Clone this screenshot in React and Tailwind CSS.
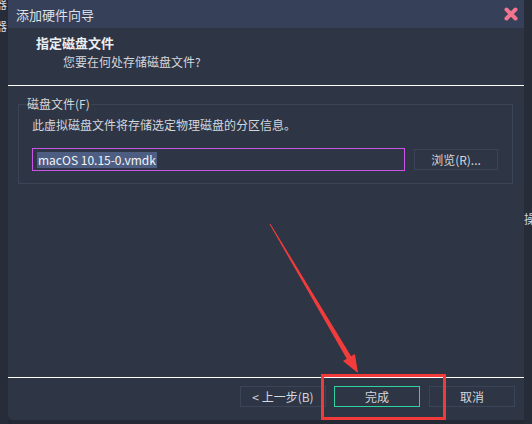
export default function App() {
  const btn = 'w-[86px] h-[21px] border flex items-center justify-center text-[12px] leading-none';

  return (
    <div className="relative w-[532px] h-[424px] bg-[#232a35] flex font-['Noto_Sans_CJK_SC',sans-serif] text-[#d3d7de] overflow-hidden">
      {/* left edge of window behind */}
      <div className="w-[8px] h-full bg-[#262d39] overflow-hidden flex flex-col">
        <span className="-ml-[5px] text-[12px] leading-[12px] -mt-[2px]">器</span>
        <span className="-ml-[5px] text-[12px] leading-[12px] mt-[10px]">器</span>
      </div>

      {/* dialog */}
      <div className="w-[516px] h-[420px] flex flex-col bg-[#2e3545] rounded-bl-[5px]">
        <div className="h-[28px] bg-[#364058] flex items-center justify-between pl-[8px] pr-[6px]">
          <span className="text-[13px] leading-none text-[#dde1e8]">添加硬件向导</span>
          <svg width="14" height="14" viewBox="0 0 14 14">
            <path d="M2.5 2.5 L11.5 11.5 M11.5 2.5 L2.5 11.5" stroke="#f2758f" strokeWidth="4" strokeLinecap="round" />
          </svg>
        </div>

        <div className="h-[57px] pt-[6px] flex flex-col gap-[1px]">
          <div className="pl-[28px] text-[13px] leading-[18px] font-bold text-[#eceef2]">指定磁盘文件</div>
          <div className="pl-[55px] text-[12px] leading-[18px]">您要在何处存储磁盘文件?</div>
        </div>
        <div className="h-px bg-white" />

        <div className="flex-1 px-[10px] pr-[11px]">
          <fieldset className="mt-[10px] border border-[#3a4558] pl-[7px] pr-[14px] pt-[5px] pb-[12px]">
            <legend className="px-[1px] text-[12px] leading-[16px]">磁盘文件(F)</legend>
            <div className="pl-[6px]">
              <div className="text-[12px] leading-[16px]">此虚拟磁盘文件将存储选定物理磁盘的分区信息。</div>
              <div className="mt-[15px] flex items-center gap-[9px]">
                <div className="w-[373px] h-[23px] border border-[#c855e6] flex items-center pl-[4px]">
                  <span className="bg-[#4d5e82] text-[#f2f4f8] text-[12px] leading-[16px] px-[1px]">macOS 10.15-0.vmdk</span>
                </div>
                <div className="w-[84px] h-[21px] border border-[#3a4558] flex items-center justify-center text-[12px] leading-none">
                  浏览(R)...
                </div>
              </div>
            </div>
          </fieldset>
        </div>

        <div className="h-px bg-white" />
        <div className="flex justify-end gap-[8px] pt-[8px] pb-[13px] pr-[9px]">
          <div className={`${btn} border-[#3a4558]`}>&lt; 上一步(B)</div>
          <div className={`${btn} border-[#2fd3a0]`}>完成</div>
          <div className={`${btn} border-[#3a4558] ml-[1px]`}>取消</div>
        </div>
      </div>

      {/* right edge of window behind */}
      <div className="w-[8px] h-full bg-[#262d39] overflow-hidden">
        <span className="block mt-[212px] text-[12px] leading-[14px]">操</span>
      </div>

      {/* annotation overlay */}
      <div className="absolute left-[321px] top-[374px] w-[125px] h-[46px] border-[3px] border-[#f23a3a]" />
      <svg className="absolute left-0 top-0 pointer-events-none" width="532" height="424">
        <polygon
          points="270.4,223.8 351.1,356.2 354.9,353.9 358,373 342.9,361.1 346.7,358.8 269.6,224.2"
          fill="#f23c3c"
        />
      </svg>
    </div>
  );
}
